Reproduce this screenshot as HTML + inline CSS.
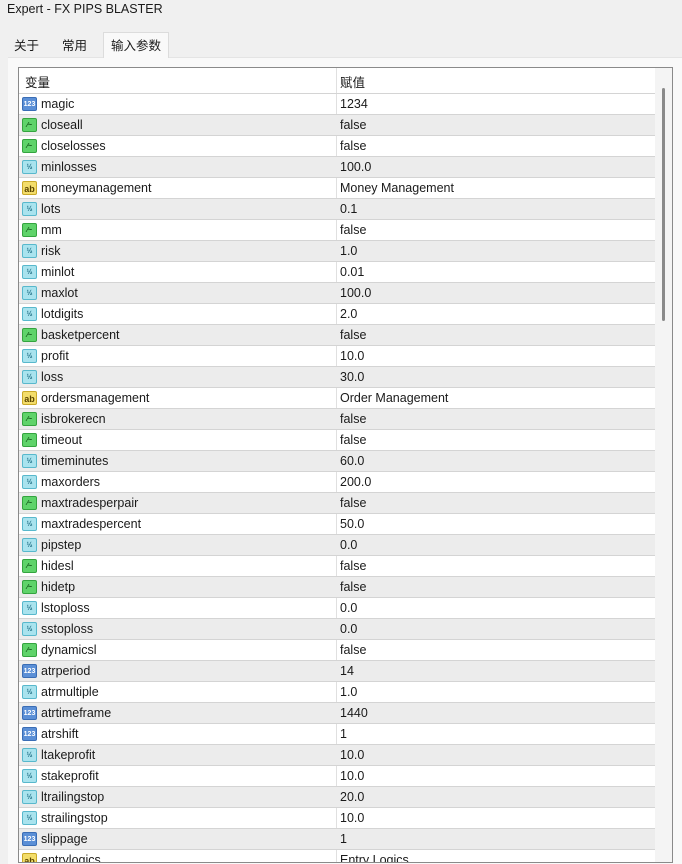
<!DOCTYPE html>
<html><head><meta charset="utf-8"><style>
*{margin:0;padding:0;box-sizing:border-box}
body{width:682px;height:864px;background:#f0f0f0;font-family:"Liberation Sans","Noto Sans CJK SC",sans-serif;font-size:12.5px;color:#1a1a1a;position:relative;overflow:hidden}
.title{position:absolute;left:7px;top:2px;font-size:12.5px}
.tab{position:absolute;top:34px;height:24px;line-height:24px;padding:0 7px;font-size:12.5px}
.tab.act{background:#f9f9f9;border:1px solid #dcdcdc;border-bottom:none;top:32px;height:26px;line-height:26px}
.panel{position:absolute;left:8px;top:57px;width:674px;height:807px;background:#f9f9f9;border-top:1px solid #e4e4e4}
.box{position:absolute;left:18px;top:67px;width:655px;height:796px;border:1px solid #8a8a8a;background:#fff;overflow:hidden}
.hdr{position:absolute;left:0;top:0;width:636px;height:25px}
.hdr span{position:absolute;top:4px}
.row{position:absolute;left:0;width:636px;height:21px;border-top:1px solid #d4d4d4}
.row.g{background:#ececec}
.row .n{position:absolute;left:22px;top:3px}
.row .v{position:absolute;left:321px;top:3px}
.div{position:absolute;left:317px;top:0;width:1px;height:800px;background:#e0e0e0}
.ic{position:absolute;left:3px;top:3px;width:15px;height:14px;border-radius:2px;font-size:7px;line-height:14px;text-align:center;font-weight:bold}
.i{background:#5b8fd6;color:#fff;border:1px solid #3a6db5}
.b{background:#5fd36a;border:1px solid #34a43f;color:#0a4a10}
.d{background:#a9e3ee;border:1px solid #58b8cc;color:#1a6a80}
.s{background:#f3dd6a;border:1px solid #c9a928;color:#5a4500;font-size:9px}
.sb{position:absolute;left:636px;top:0;width:17px;height:796px;background:#f4f4f4}
.th{position:absolute;left:7px;top:20px;width:3px;height:233px;background:#8a8a8a;border-radius:2px}
</style></head><body>
<div class="title">Expert - FX PIPS BLASTER</div>
<div class="panel"></div>
<div class="tab" style="left:7px">关于</div>
<div class="tab" style="left:55px">常用</div>
<div class="tab act" style="left:103px">输入参数</div>
<div class="box">
<div class="hdr"><span style="left:6px">变量</span><span style="left:321px">赋值</span></div>
<div class="div"></div>
<div id="rows"></div>
<div class="sb"><div class="th"></div></div>
</div>
<script>
var d=[["magic","i","1234"],["closeall","b","false"],["closelosses","b","false"],["minlosses","d","100.0"],["moneymanagement","s","Money Management"],["lots","d","0.1"],["mm","b","false"],["risk","d","1.0"],["minlot","d","0.01"],["maxlot","d","100.0"],["lotdigits","d","2.0"],["basketpercent","b","false"],["profit","d","10.0"],["loss","d","30.0"],["ordersmanagement","s","Order Management"],["isbrokerecn","b","false"],["timeout","b","false"],["timeminutes","d","60.0"],["maxorders","d","200.0"],["maxtradesperpair","b","false"],["maxtradespercent","d","50.0"],["pipstep","d","0.0"],["hidesl","b","false"],["hidetp","b","false"],["lstoploss","d","0.0"],["sstoploss","d","0.0"],["dynamicsl","b","false"],["atrperiod","i","14"],["atrmultiple","d","1.0"],["atrtimeframe","i","1440"],["atrshift","i","1"],["ltakeprofit","d","10.0"],["stakeprofit","d","10.0"],["ltrailingstop","d","20.0"],["strailingstop","d","10.0"],["slippage","i","1"],["entrylogics","s","Entry Logics"]];
var t={i:"123",b:"⁄~",d:"½",s:"ab"};var h="";
d.forEach(function(r,k){h+='<div class="row'+(k%2?' g':'')+'" style="top:'+(25+21*k)+'px"><div class="ic '+r[1]+'">'+t[r[1]]+'</div><span class="n">'+r[0]+'</span><span class="v">'+r[2]+'</span></div>';});
document.getElementById("rows").innerHTML=h;
</script>
</body></html>
